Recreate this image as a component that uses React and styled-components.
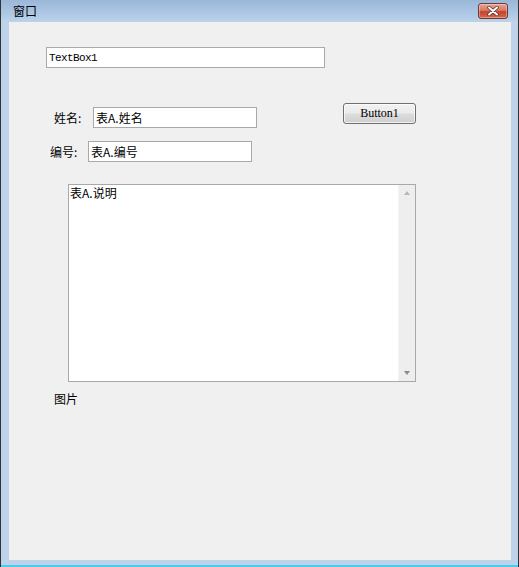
import styled, { createGlobalStyle } from "styled-components";

const GlobalStyle = createGlobalStyle`
  html, body {
    margin: 0;
    padding: 0;
    background: #ffffff;
  }
  * {
    box-sizing: border-box;
  }
`;

const cjk = `"Noto Sans CJK SC", "Noto Sans", sans-serif`;
const mono = `"Liberation Mono", "Noto Sans CJK SC", monospace`;

function App() {
  return (
    <>
      <GlobalStyle />
      <Window>
        <TitleBar>
          <Title>窗口</Title>
          <CloseButton aria-label="close">
            <svg width="14" height="10" viewBox="0 0 14 10">
              <path
                d="M3 1.5 L11 8.5 M11 1.5 L3 8.5"
                stroke="#5a2a22"
                strokeWidth="3.4"
                strokeLinecap="round"
              />
              <path
                d="M3 1.5 L11 8.5 M11 1.5 L3 8.5"
                stroke="#ffffff"
                strokeWidth="2"
                strokeLinecap="round"
              />
            </svg>
          </CloseButton>
        </TitleBar>
        <Client>
          <TextBox $indent={37} $width={279} $mono>
            TextBox1
          </TextBox>

          <FieldRow $gap={35}>
            <Field $indent={45} $labelWidth={39}>
              <Label>姓名:</Label>
              <TextBox $width={164}>表A.姓名</TextBox>
            </Field>
            <PushButton $indent={86}>Button1</PushButton>
          </FieldRow>

          <FieldRow $gap={9}>
            <Field $indent={41} $labelWidth={38}>
              <Label>编号:</Label>
              <TextBox $width={164}>表A.编号</TextBox>
            </Field>
          </FieldRow>

          <Memo>
            <MemoText>表A.说明</MemoText>
            <ScrollBar>
              <Arrow $up />
              <Arrow />
            </ScrollBar>
          </Memo>

          <Caption>图片</Caption>
        </Client>
        <BottomEdge />
      </Window>
    </>
  );
}

const Window = styled.div`
  width: 519px;
  height: 567px;
  display: flex;
  flex-direction: column;
  background: #bed3e9;
  border-left: 1px solid #2f3337;
  border-right: 1px solid #2f3337;
`;

const TitleBar = styled.div`
  height: 22px;
  flex: none;
  display: flex;
  align-items: flex-start;
  justify-content: space-between;
  padding: 0 10px 0 12px;
  background: linear-gradient(to bottom, #9bb7d8 0%, #aac4e2 50%, #bcd3ea 100%);
`;

const Title = styled.span`
  font-family: ${cjk};
  font-size: 12px;
  line-height: 12px;
  margin-top: 5px;
  color: #000;
`;

const CloseButton = styled.div`
  width: 30px;
  height: 16px;
  margin-top: 3px;
  display: flex;
  align-items: center;
  justify-content: center;
  border: 1px solid #6b3a34;
  border-radius: 3px;
  background: linear-gradient(to bottom, #e8a293 0%, #d77a66 45%, #c4432c 55%, #d5684f 100%);
  box-shadow: inset 0 0 0 1px rgba(255, 255, 255, 0.35);
`;

const Client = styled.div`
  flex: 1;
  margin: 0 7px 0 8px;
  padding-top: 25px;
  display: flex;
  flex-direction: column;
  align-items: flex-start;
  background: #f0f0f0;
`;

const BottomEdge = styled.div`
  height: 7px;
  flex: none;
  border-bottom: 2px solid #47cdef;
`;

const TextBox = styled.div`
  width: ${(p) => p.$width}px;
  height: 21px;
  margin-left: ${(p) => p.$indent || 0}px;
  padding-left: 2px;
  display: flex;
  align-items: center;
  background: #ffffff;
  border: 1px solid #a9a9a9;
  font-family: ${(p) => (p.$mono ? mono : cjk)};
  font-size: ${(p) => (p.$mono ? "11px" : "12px")};
  letter-spacing: ${(p) => (p.$mono ? "-0.6px" : "0")};
  color: #000;
  white-space: nowrap;
`;

const FieldRow = styled.div`
  margin-top: ${(p) => p.$gap}px;
  display: flex;
  align-items: flex-start;
`;

const Field = styled.div`
  display: grid;
  grid-template-columns: ${(p) => p.$labelWidth}px auto;
  align-items: center;
  margin-left: ${(p) => p.$indent}px;
  margin-top: 4px;
`;

const Label = styled.span`
  font-family: ${cjk};
  font-size: 12px;
  color: #000;
`;

const PushButton = styled.div`
  width: 73px;
  height: 21px;
  margin-left: ${(p) => p.$indent}px;
  display: flex;
  align-items: center;
  justify-content: center;
  border: 1px solid #707070;
  border-radius: 3px;
  background: linear-gradient(to bottom, #f2f2f2 0%, #ebebeb 48%, #dddddd 52%, #cfcfcf 100%);
  box-shadow: inset 0 0 0 1px rgba(255, 255, 255, 0.7);
  font-family: "Liberation Serif", "DejaVu Serif", serif;
  font-size: 12px;
  color: #000;
`;

const Memo = styled.div`
  width: 348px;
  height: 198px;
  margin: 22px 0 0 59px;
  display: flex;
  background: #ffffff;
  border: 1px solid #a9a9a9;
`;

const MemoText = styled.div`
  flex: 1;
  padding: 0 0 0 1px;
  font-family: ${cjk};
  font-size: 12px;
  line-height: 16px;
  color: #000;
`;

const ScrollBar = styled.div`
  width: 17px;
  display: flex;
  flex-direction: column;
  justify-content: space-between;
  align-items: center;
  padding: 6px 0;
  background: #eeeeee;
  border-left: 1px solid #f4f4f4;
`;

const Arrow = styled.div`
  width: 0;
  height: 0;
  border-left: 3px solid transparent;
  border-right: 3px solid transparent;
  ${(p) =>
    p.$up
      ? "border-bottom: 4px solid #b8b8b8;"
      : "border-top: 4px solid #8a8a8a;"}
`;

const Caption = styled.span`
  margin: 9px 0 0 45px;
  font-family: ${cjk};
  font-size: 12px;
  line-height: 16px;
  color: #000;
`;

export default App;
